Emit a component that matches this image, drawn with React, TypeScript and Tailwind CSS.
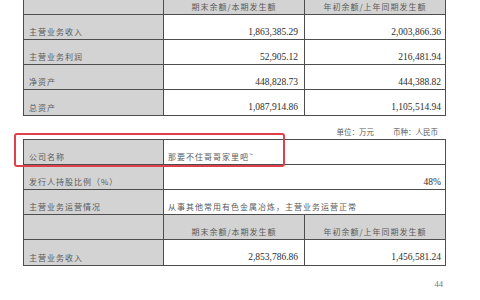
import React from "react";

const cjk = "font-['Noto_Sans_CJK_SC',sans-serif] text-[8px] tracking-[1px] text-[#5a5a5a]";
const num = "font-['Liberation_Serif',serif] text-[9.5px] text-[#2e2e2e]";

function Row({ children, last }: { children: React.ReactNode; last?: boolean }) {
  return <div className={`flex h-[25px] ${last ? "h-[24px]" : "border-b border-[#4d4d4d]"}`}>{children}</div>;
}

function Label({ text }: { text?: string }) {
  return (
    <div className={`w-[140px] shrink-0 bg-[#d3d3d3] border-r border-[#4d4d4d] flex items-center pt-[10px] pl-[5px] ${cjk}`}>
      {text}
    </div>
  );
}

function HeadCell({ text, wide, last }: { text: string; wide?: boolean; last?: boolean }) {
  return (
    <div
      className={`${wide ? "w-[141px]" : "flex-1"} ${last ? "" : "border-r border-[#4d4d4d]"} bg-[#d3d3d3] flex items-center justify-center pt-[10px] ${cjk}`}
    >
      {text}
    </div>
  );
}

function NumCell({ v, wide, last }: { v: string; wide?: boolean; last?: boolean }) {
  return (
    <div
      className={`${wide ? "w-[141px] pr-[6px]" : "flex-1 pr-[4px]"} ${last ? "" : "border-r border-[#4d4d4d]"} bg-white flex items-center justify-end pt-[10px] ${num}`}
    >
      {v}
    </div>
  );
}

const rows1 = [
  ["主营业务收入", "1,863,385.29", "2,003,866.36"],
  ["主营业务利润", "52,905.12", "216,481.94"],
  ["净资产", "448,828.73", "444,388.82"],
  ["总资产", "1,087,914.86", "1,105,514.94"],
];

export default function App() {
  return (
    <div className="relative w-[480px] h-[300px] bg-white overflow-hidden">
      {/* Table 1 */}
      <div className="ml-[23px] w-[423px] -mt-[11px] border border-[#4d4d4d] flex flex-col">
        <Row>
          <Label />
          <HeadCell text="期末余额/本期发生额" wide />
          <HeadCell text="年初余额/上年同期发生额" last />
        </Row>
        {rows1.map((r, i) => (
          <Row key={r[0]} last={i === rows1.length - 1}>
            <Label text={r[0]} />
            <NumCell v={r[1]} wide />
            <NumCell v={r[2]} last />
          </Row>
        ))}
      </div>

      {/* Unit line */}
      <div className="w-[446px] h-[23px] flex items-center justify-end pt-[8px] pr-[8px] font-['Noto_Sans_CJK_SC',sans-serif] text-[7.5px] text-[#5a5a5a]">
        <span>单位：万元</span>
        <span className="ml-[19px]">币种：人民币</span>
      </div>

      {/* Table 2 */}
      <div className="ml-[23px] w-[423px] border border-[#4d4d4d] flex flex-col">
        <Row>
          <Label text="公司名称" />
          <div className={`flex-1 bg-white flex items-center pt-[10px] pl-[4px] ${cjk}`}>
            那要不住哥哥家里吧<span className="relative -top-[3px] text-[7px]">~</span>
          </div>
        </Row>
        <Row>
          <Label text="发行人持股比例（%）" />
          <div className={`flex-1 bg-white flex items-center justify-end pt-[10px] pr-[4px] ${num}`}>48%</div>
        </Row>
        <Row>
          <Label text="主营业务运营情况" />
          <div className={`flex-1 bg-white flex items-center pt-[10px] pl-[4px] ${cjk}`}>
            从事其他常用有色金属冶炼，主营业务运营正常
          </div>
        </Row>
        <Row>
          <Label />
          <HeadCell text="期末余额/本期发生额" wide />
          <HeadCell text="年初余额/上年同期发生额" last />
        </Row>
        <Row last>
          <Label text="主营业务收入" />
          <NumCell v="2,853,786.86" wide />
          <NumCell v="1,456,581.24" last />
        </Row>
      </div>

      {/* Page number */}
      <div className="flex justify-end pr-[37px] mt-[12px] font-['Liberation_Serif',serif] text-[8.5px] text-[#777]">
        44
      </div>

      {/* Red highlight box */}
      <div className="absolute left-[14px] top-[133px] w-[271px] h-[34px] border-2 border-[#e0404a] rounded-[3px]" />
    </div>
  );
}
